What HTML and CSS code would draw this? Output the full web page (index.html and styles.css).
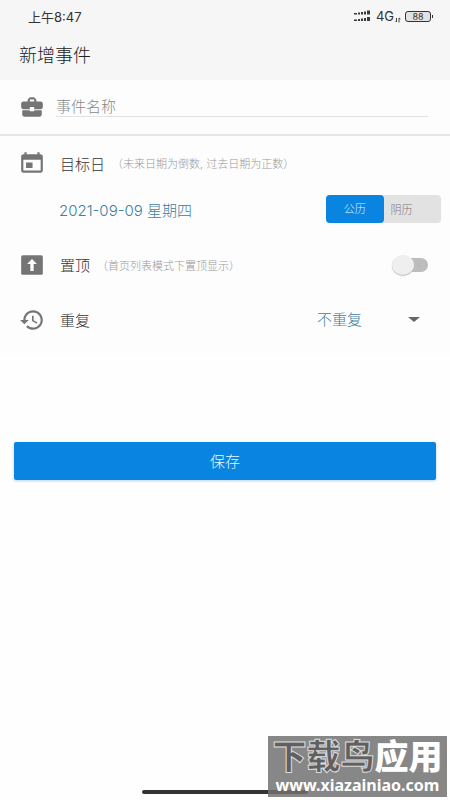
FILE: index.html
```html
<!DOCTYPE html>
<html lang="zh-CN">
<head>
<meta charset="utf-8">
<meta name="viewport" content="width=device-width, initial-scale=1">
<title>新增事件</title>
<link rel="stylesheet" href="styles.css">
</head>
<body>
<header class="header">
  <div class="status">
    <span class="time">上午8:47</span>
    <span class="status-icons">
      <svg width="18" height="12" viewBox="0 0 18 12" fill="#3a3a3a" aria-hidden="true">
        <path d="M1 3h3v1.500H1zM5 2.500h2v2H5zM8 2h2v2.500H8zM11 1.500h2v3h-2zM14 .5h3v4h-3zM1 9.500h3V11H1zM5 9h2v2H5zM8 8.500h2V11H8zM11 8h2v3h-2zM14 7h3v4h-3z"/>
      </svg>
      <span class="network">4G</span>
      <svg class="traffic" width="6" height="6" viewBox="0 0 6 6" fill="none" stroke="#444" aria-hidden="true">
        <path d="M1.500 1v4M.5 4l1 1M4 5.500V1l1.500 1"/>
      </svg>
      <span class="battery">88</span>
    </span>
  </div>
  <h1 class="title">新增事件</h1>
</header>
<main>
  <form class="form">
    <div class="row name-row">
      <svg class="icon" viewBox="0 0 24 24" fill="#757575" aria-hidden="true">
        <path d="M10 16v-1H3.010L3 19c0 1.110.89 2 2 2h14c1.110 0 2-.89 2-2v-4h-7v1h-4zm10-9h-4.010V5l-2-2h-4l-2 2v2H4c-1.100 0-2 .9-2 2v3c0 1.110.89 2 2 2h6v-2h4v2h6c1.100 0 2-.9 2-2V9c0-1.100-.9-2-2-2zm-6 0h-4V5h4v2z"/>
      </svg>
      <input class="name-input" type="text" placeholder="事件名称" aria-label="事件名称">
    </div>
    <div class="row target-row">
      <svg class="icon" viewBox="0 0 24 24" aria-hidden="true">
        <path fill="#757575" d="M20 4h-1V2h-2v2H7V2H5v2H4c-1.100 0-2 .9-2 2v13c0 1.100.9 2 2 2h16c1.100 0 2-.9 2-2V6c0-1.100-.9-2-2-2zm0 15H4V9h16v10zM6.500 11.500h6v5h-6z"/>
      </svg>
      <span class="label">目标日</span>
      <span class="hint">（未来日期为倒数, 过去日期为正数）</span>
    </div>
    <div class="row date-row">
      <button class="date" type="button">2021-09-09 星期四</button>
      <div class="segment" role="radiogroup" aria-label="历法">
        <label class="option"><input type="radio" name="calendar" checked><span>公历</span></label>
        <label class="option"><input type="radio" name="calendar"><span>阴历</span></label>
      </div>
    </div>
    <div class="row">
      <svg class="icon" viewBox="0 0 24 24" aria-hidden="true">
        <rect x="2" y="3" width="20" height="18" rx="1.500" fill="#757575"/>
        <path fill="#fff" d="M12 6.500l4.500 4.500h-3v6.500h-3V11h-3z"/>
      </svg>
      <label class="label" for="pin">置顶</label>
      <span class="hint">（首页列表模式下置顶显示）</span>
      <input class="switch" id="pin" type="checkbox">
    </div>
    <div class="row">
      <svg class="icon" viewBox="0 0 24 24" fill="#757575" aria-hidden="true">
        <path d="M13 3c-4.970 0-9 4.030-9 9H1l3.890 3.890.07.14L9 12H6c0-3.870 3.130-7 7-7s7 3.130 7 7-3.130 7-7 7c-1.930 0-3.680-.79-4.940-2.060l-1.420 1.420C8.270 19.990 10.510 21 13 21c4.970 0 9-4.030 9-9s-4.030-9-9-9zm-1 5v5l4.280 2.540.72-1.210-3.500-2.080V8H12z"/>
      </svg>
      <label class="label" for="repeat">重复</label>
      <div class="select-box">
        <select id="repeat"><option>不重复</option></select>
      </div>
    </div>
  </form>
  <button class="save" type="button">保存</button>
</main>
<div class="home-bar"></div>
<div class="watermark">
  <div class="mark-name"><span class="mark-dark">下载鸟</span>应用</div>
  <div class="mark-url">www.xiazainiao.com</div>
</div>
</body>
</html>
```
FILE: styles.css
```css
* {
  box-sizing: border-box;
}

body {
  position: relative;
  display: flex;
  flex-direction: column;
  min-height: 100vh;
  margin: 0;
  background: #fefefe;
  color: #333;
  font-family: Inter, "Noto Sans CJK SC", sans-serif;
  font-weight: 300;
}

button,
input,
select {
  margin: 0;
  padding: 0;
  border: 0;
  background: none;
  font: inherit;
}

.header {
  height: 80px;
  background: #f6f6f6;
}

.status {
  display: flex;
  align-items: center;
  justify-content: space-between;
  height: 32px;
  padding: 0 16px 0 28px;
}

.time {
  font-size: 13px;
  font-weight: 400;
}

.status-icons {
  display: flex;
  align-items: center;
}

.network {
  margin-left: 5px;
  font-size: 13px;
  font-weight: 400;
}

.traffic {
  align-self: flex-end;
  margin: 0 4px 1px 1px;
}

.battery {
  position: relative;
  width: 26px;
  height: 11px;
  margin-right: 3px;
  border: 1px solid #333;
  border-radius: 3px;
  background: #e2e2e2;
  font-size: 9px;
  font-weight: 400;
  line-height: 9px;
  text-align: center;
}

.battery::after {
  content: "";
  position: absolute;
  top: 3px;
  right: -3px;
  width: 1px;
  height: 3px;
  background: #333;
}

.title {
  margin: 0;
  padding: 10px 19px 0;
  color: #222;
  font-size: 18px;
  font-weight: 300;
  line-height: 28px;
}

.form {
  background: #fdfdfd;
  padding-bottom: 8px;
}

.row {
  display: flex;
  align-items: center;
  height: 55px;
  padding: 0 22px 0 19px;
}

.icon {
  flex: none;
  width: 26px;
  height: 26px;
}

.name-row {
  height: 56px;
  border-bottom: 2px solid #e6e6e6;
}

.name-input {
  flex: 1;
  min-width: 0;
  height: 20px;
  margin-left: 11px;
  border-bottom: 1px solid #e2e2e2;
  outline: 0;
  font-size: 15px;
}

.name-input::placeholder {
  color: #888;
  opacity: 1;
}

.label {
  margin-left: 15px;
  font-size: 15px;
}

.hint {
  margin-left: 7px;
  color: #999;
  font-size: 11px;
}

.target-row {
  height: 54px;
}

.date-row {
  height: 38px;
  justify-content: space-between;
  margin-bottom: 9px;
  padding: 0 9px 0 59px;
}

.date {
  color: #41809f;
  font-size: 15px;
}

.segment {
  display: flex;
  width: 115px;
  height: 28px;
  border-radius: 4px;
  background: #e2e2e2;
}

.option {
  flex: 1;
  font-size: 11px;
  line-height: 30px;
  color: #777;
}

.option input {
  position: absolute;
  appearance: none;
}

.option span {
  display: block;
  height: 28px;
  padding-left: 7px;
  border-radius: 4px;
}

.option input:checked + span {
  padding: 0;
  background: #0984e0;
  color: #d8f4ff;
  line-height: 28px;
  text-align: center;
}

.switch {
  appearance: none;
  display: flex;
  align-items: center;
  width: 36px;
  height: 14px;
  margin-left: auto;
  border-radius: 7px;
  background: #bdbdbd;
}

.switch::before {
  content: "";
  width: 22px;
  height: 20px;
  border-radius: 50%;
  background: #efefef;
  box-shadow: 0 1px 1px #bbb;
}

.switch:checked::before {
  margin-left: auto;
}

.select-box {
  display: grid;
  align-items: center;
  width: 103px;
  margin: 0 8px 0 auto;
}

.select-box select,
.select-box::after {
  grid-area: 1 / 1;
}

.select-box select {
  appearance: none;
  color: #41809f;
  font-size: 15px;
}

.select-box::after {
  content: "";
  justify-self: end;
  border: 6px solid transparent;
  border-top: 5px solid #666;
  border-bottom: 0;
  pointer-events: none;
}

.save {
  display: block;
  width: calc(100% - 28px);
  height: 38px;
  margin: 87px 14px 0;
  padding-bottom: 2px;
  border-radius: 2px;
  background: #0984e0;
  box-shadow: 0 1px 3px #b5d3e8;
  color: #e8faff;
  font-size: 15px;
}

.home-bar {
  width: 37%;
  height: 4px;
  margin: auto auto 6px;
  border-radius: 2px;
  background: #333;
}

.watermark {
  position: absolute;
  right: 3px;
  bottom: 3px;
  width: 179px;
  height: 61px;
  background: rgba(112, 112, 112, 0.84);
  color: #fff;
  font-weight: 700;
  text-align: center;
  white-space: nowrap;
}

.mark-name {
  padding-top: 2px;
  font-size: 34px;
  font-weight: 900;
  line-height: 38px;
}

.mark-dark {
  color: #606060;
  -webkit-text-stroke: 1px #ddd;
}

.mark-url {
  font-family: "Noto Sans", sans-serif;
  font-size: 16px;
  line-height: 18px;
}
```
